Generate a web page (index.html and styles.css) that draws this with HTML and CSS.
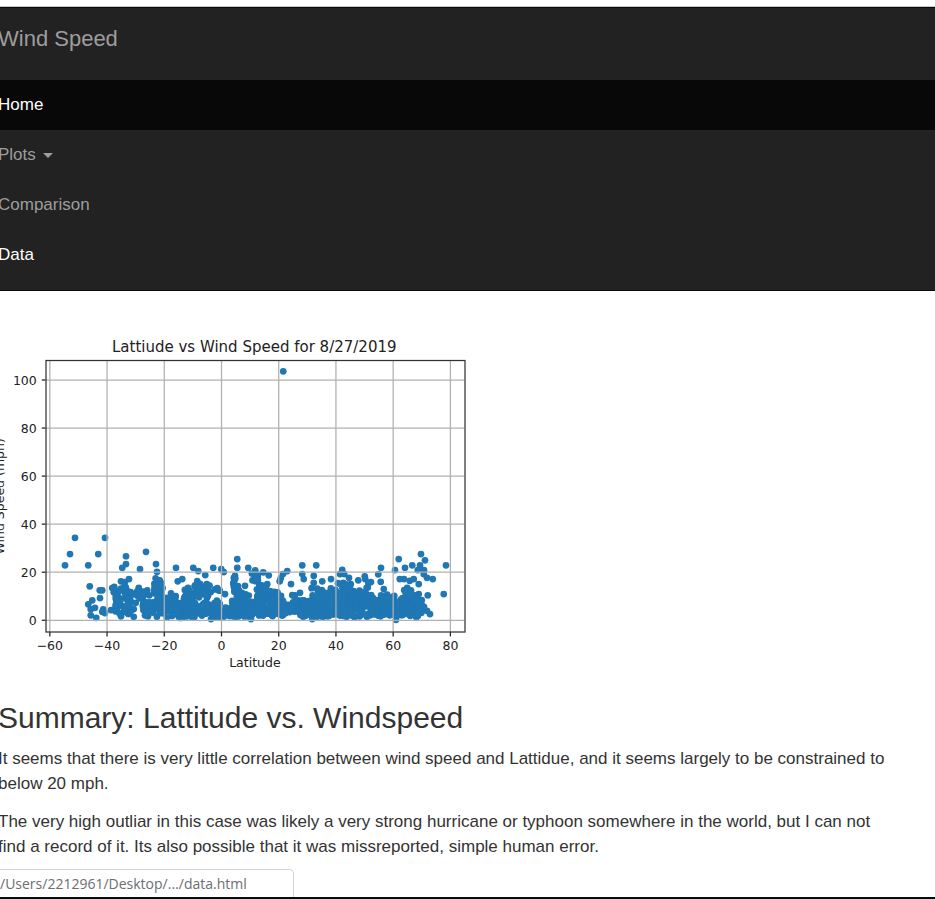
FILE: index.html
```html
<!DOCTYPE html>
<html lang="en">
<head>
  <meta charset="utf-8">
  <meta name="viewport" content="width=device-width, initial-scale=1">
  <title>Wind Speed</title>
  <link rel="stylesheet" href="styles.css">
</head>
<body>
  <nav class="navbar" aria-label="Main">
    <a class="brand" href="#">Wind Speed</a>
    <ul class="nav-list">
      <li><a class="nav-link active" href="#">Home</a></li>
      <li><a class="nav-link" href="#">Plots <span class="caret"></span></a></li>
      <li><a class="nav-link" href="#">Comparison</a></li>
      <li><a class="nav-link hovered" href="#">Data</a></li>
    </ul>
  </nav>
  <main class="content">
    <svg class="chart" viewBox="0 0 432 288" role="img" aria-label="Scatter plot of wind speed against latitude">
      <g id="dots" class="dots"></g>
      <g id="grid"></g>
      <rect class="frame" x="54.4" y="34.8" width="335.2" height="217.2"/>
      <text class="chart-title" x="221" y="28">Lattiude vs Wind Speed for 8/27/2019</text>
      <text class="axis-label" x="221.5" y="280">Latitude</text>
      <text class="axis-label" transform="translate(21 143.5) rotate(-90)">Wind Speed (mph)</text>
    </svg>
    <h3>Summary: Lattitude vs. Windspeed</h3>
    <p>It seems that there is very little correlation between wind speed and Lattidue, and it seems largely to be constrained to below 20 mph.</p>
    <p>The very high outliar in this case was likely a very strong hurricane or typhoon somewhere in the world, but I can not find a record of it. Its also possible that it was missreported, simple human error.</p>
  </main>
  <footer class="bottom-bar">
    <div class="link-status">/Users/2212961/Desktop/.../data.html</div>
  </footer>
  <script src="chart.js"></script>
</body>
</html>
```
FILE: styles.css
```css
* {
  box-sizing: border-box;
}

html {
  overflow: hidden;
}

body {
  margin: 0 0 0 -2px;
  background: #fff;
  color: #333;
  font-family: "Liberation Sans", Arial, sans-serif;
  font-size: 17px;
  line-height: 25px;
}

.navbar {
  margin-top: 7px;
  padding-bottom: 10px;
  border-top: 1px solid #080808;
  border-bottom: 1px solid #080808;
  background: #222;
  box-shadow: 0 -1px 0 #c8cccf;
}

.brand {
  display: block;
  padding: 18px 0 29px;
  color: #9d9d9d;
  font-size: 22px;
  line-height: 25px;
  text-decoration: none;
}

.nav-list {
  margin: 0;
  padding: 0;
  list-style: none;
}

.nav-link {
  display: block;
  padding: 12px 0;
  color: #9d9d9d;
  line-height: 26px;
  text-decoration: none;
}

.active {
  background: #080808;
  color: #fff;
}

.hovered {
  color: #fff;
}

.caret {
  display: inline-block;
  margin-left: 2px;
  border-top: 5px solid;
  border-right: 5px solid transparent;
  border-left: 5px solid transparent;
  vertical-align: middle;
}

.content {
  padding-right: 40px;
}

.chart {
  display: block;
  width: 540px;
  margin: 26px 0 24px -20px;
}

.dots {
  fill: #1f77b4;
}

.grid-line {
  stroke: #b0b0b0;
  stroke-width: 1;
}

.tick {
  stroke: #222;
  stroke-width: 1;
}

.frame {
  fill: none;
  stroke: #333;
  stroke-width: 1;
}

.chart text {
  fill: #222;
  font-family: "DejaVu Sans", sans-serif;
  font-size: 10px;
  text-anchor: middle;
}

.chart .chart-title {
  font-size: 12px;
}

.chart .y-value {
  text-anchor: end;
}

h3 {
  margin: 0 0 12px;
  font-size: 30px;
  font-weight: 400;
  line-height: 33px;
}

p {
  margin: 0 0 13px;
}

.bottom-bar {
  position: fixed;
  right: 0;
  bottom: 0;
  left: 0;
  border-bottom: 2px solid #0a0a0f;
}

.link-status {
  width: 294px;
  padding: 2px 0;
  border-top: 1px solid #d4d4d4;
  border-right: 1px solid #d4d4d4;
  border-radius: 0 5px 0 0;
  background: #fff;
  color: #6b6e72;
  font-family: "Open Sans", "Noto Sans", sans-serif;
  font-size: 14px;
  line-height: 23px;
}
```
FILE: chart.js
```js
const SVG = "http://www.w3.org/2000/svg";
const grid = document.getElementById("grid");
const dots = document.getElementById("dots");

function add(parent, name, attrs, text) {
  const node = document.createElementNS(SVG, name);
  for (const key in attrs) node.setAttribute(key, attrs[key]);
  if (text !== undefined) node.textContent = text;
  parent.appendChild(node);
}

// Data scales, in chart units.
const xOf = lat => 194.8 + lat * 2.289;
const yOf = mph => 242.6 - mph * 1.922;

for (let lat = -60; lat <= 80; lat += 20) {
  const x = xOf(lat);
  add(grid, "line", { class: "grid-line", x1: x, x2: x, y1: 35, y2: 252 });
  add(grid, "line", { class: "tick", x1: x, x2: x, y1: 252, y2: 255.5 });
  add(grid, "text", { x: x, y: 266 }, String(lat).replace("-", "\u2212"));
}
for (let mph = 0; mph <= 100; mph += 20) {
  const y = yOf(mph);
  add(grid, "line", { class: "grid-line", x1: 54, x2: 389, y1: y, y2: y });
  add(grid, "line", { class: "tick", x1: 51, x2: 54, y1: y, y2: y });
  add(grid, "text", { class: "y-value", x: 47, y: y + 4 }, mph);
}

const readings = [
  283.3,371.3, 75,537.7, 105,537.7, 70,554, 98.3,554, 65,565.3, 88.3,565.3,
  126,556.3, 126,564, 122.3,567.7, 146,551.7, 140,569, 156,564, 89.7,586.3,
  99.7,590.3, 102.3,590.3, 100,598, 92.3,600.3, 88.3,604.3, 95,607.7,
  90.7,609.3, 90.7,615.3, 96.3,617.7, 103.3,609.3, 102.3,611.7, 105,613,
  111,610, 115,610, 129,579, 121,581.3, 124.7,582, 114.3,586.7, 112.3,588,
  113.7,592.3, 135.7,602.7, 138.7,587.7, 147.3,590.3, 149.3,595.3,
  133.7,616.7, 121,616.3, 133.7,609, 157,571.7, 176,567.7, 193.3,567.7,
  198.3,571, 205.3,575, 177.7,581.3, 182.3,579, 188,587.7, 197.3,581,
  171,593.3, 175.7,596, 213.3,567.7, 221.3,569, 223.7,572, 237.3,559,
  237.3,567.7, 248.3,567.7, 255.3,570.3, 263.3,572.3, 268.7,575.3,
  287.3,571, 283,574, 279.7,581.3, 280.7,578.3, 291,584, 225,594,
  267.3,584, 235,575.7, 245,585.7, 281,595.7, 292.3,595, 251,619, 211,619,
  302.3,565.3, 316.3,565.3, 302.3,574, 303.7,579, 313.7,575.7, 313.7,582.7,
  322.3,581.3, 331,579, 342.3,569.7, 340,574, 344.3,574, 349,577.7,
  350.7,584, 358.3,580.3, 364.7,576.3, 365.3,579, 371,582, 381,567.7,
  378.3,574.3, 380.7,581.7, 300,592.7, 383.7,589, 312.3,619, 398.7,559,
  421,554, 425,560.3, 446,565.3, 443.7,594, 395,570, 405,567.7, 412.3,565.3,
  420,565.3, 417.7,570, 424,570, 423.7,574, 427,577.7, 432.7,579,
  399.7,579, 404,579, 409.7,580.7, 413.7,579, 418.7,584, 427.7,595.3,
  407.3,587.7, 411,590.3, 418.7,594, 430,614, 424,606.7, 427,610.7,
  396,619.7, 416.3,617.3, 421.7,600
];

// Dense clusters: left, right, top, bottom, number of readings.
const clusters = [
  [115,132,590,614,48], [120,128,584,590,6], [132,139,589,595,4],
  [136,150,590,596,8], [139,146,595,600,4], [143,165,602,614,48],
  [145,157,612,617,6], [154,163,577,601,28], [166,185,602,618,46],
  [166,178,595,602,8], [184,196,589,616,40], [194,209,583,598,24],
  [209,220,585,592,7], [186,220,600,617,80], [218,232,607,617,24],
  [231,249,595,617,52], [233,238,577,595,12], [238,246,585,597,8],
  [250,259,573,582,9], [256,271,584,600,30], [248,284,600,616,78],
  [270,278,590,602,10], [284,300,604,613,32], [289,300,595,604,6],
  [300,336,600,617,110], [310,322,588,600,14], [320,337,588,600,18],
  [337,350,580,600,28], [337,392,600,617,140], [351,372,590,600,26],
  [372,392,594,602,16], [360,370,581,588,3], [392,418,595,617,90],
  [404,412,590,597,6], [416,422,599,614,16]
];

const LEFT = -22;
const TOP = 317;
const SCALE = 1.25;
function plot(x, y) {
  add(dots, "circle", {
    cx: ((x - LEFT) / SCALE).toFixed(1),
    cy: ((y - TOP) / SCALE).toFixed(1),
    r: 2.7
  });
}

for (let i = 0; i < readings.length; i += 2) plot(readings[i], readings[i + 1]);

let seed = 827;
function random() {
  seed = (seed * 16807) % 2147483647;
  return seed / 2147483647;
}
for (const [left, right, top, bottom, count] of clusters) {
  for (let i = 0; i < count; i++) {
    plot(left + random() * (right - left), top + random() * (bottom - top));
  }
}
```
